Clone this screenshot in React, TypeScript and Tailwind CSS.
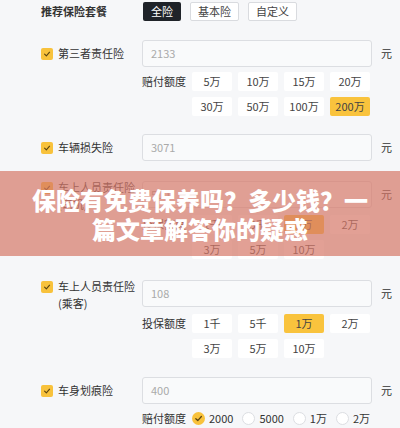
import React from "react";

const font = { fontFamily: '"Noto Sans CJK SC", "Noto Sans", sans-serif' };

function Check({ size = 12 }: { size?: number }) {
  return (
    <svg width={size - 4} height={size - 4} viewBox="0 0 10 10" fill="none">
      <path d="M2 5.2 L4.2 7.3 L8.2 2.8" stroke="#5a4410" strokeWidth="1.4" strokeLinecap="round" strokeLinejoin="round" />
    </svg>
  );
}

function CheckBox() {
  return (
    <div className="w-[12px] h-[12px] shrink-0 rounded-[2px] bg-[#f8c23c] flex items-center justify-center">
      <Check />
    </div>
  );
}

function Opt({ label, active }: { label: string; active?: boolean }) {
  return (
    <div
      className={
        "w-[40px] h-[19px] flex items-center justify-center text-[11px] text-[#444] rounded-[2px] " +
        (active ? "bg-[#f9c33d]" : "bg-white")
      }
    >
      {label}
    </div>
  );
}

function InputRow({
  label,
  label2,
  value,
}: {
  label: string;
  label2?: string;
  value: string;
}) {
  return (
    <div className="flex items-center h-[27px]">
      <div className="w-[101px] h-[27px] relative flex items-center">
        {label2 ? (
          <div className="flex items-start gap-[5px] self-start mt-[-2px]">
            <div className="mt-[2.5px]">
              <CheckBox />
            </div>
            <div className="text-[11px] leading-[17px] text-[#333]">
              <div>{label}</div>
              <div>{label2}</div>
            </div>
          </div>
        ) : (
          <div className="flex items-center gap-[5px]">
            <CheckBox />
            <div className="text-[11px] leading-[17px] text-[#333]">{label}</div>
          </div>
        )}
      </div>
      <div className="w-[230px] h-[27px] border border-[#dcdee2] bg-[#f9fafb] rounded-[3px] flex items-center pl-[8px] text-[11px] text-[#aaaaaa]">
        {value}
      </div>
      <div className="ml-[9px] text-[11px] text-[#333]">元</div>
    </div>
  );
}

function Options({ title, rows }: { title: string; rows: { l: string; a?: boolean }[][] }) {
  return (
    <div className="flex ml-[101px]">
      <div className="w-[50px] h-[19px] flex items-center text-[11px] text-[#333]">{title}</div>
      <div className="flex flex-col gap-[6px]">
        {rows.map((r, i) => (
          <div key={i} className="flex gap-[6px]">
            {r.map((o) => (
              <Opt key={o.l} label={o.l} active={o.a} />
            ))}
          </div>
        ))}
      </div>
    </div>
  );
}

function Radio({ label, checked }: { label: string; checked?: boolean }) {
  return (
    <div className="flex items-center gap-[4px]">
      {checked ? (
        <div className="w-[13px] h-[13px] rounded-full bg-[#f8c23c] flex items-center justify-center">
          <Check size={13} />
        </div>
      ) : (
        <div className="w-[13px] h-[13px] rounded-full bg-white border border-[#dcdee2]" />
      )}
      <span className="text-[11px] text-[#333]">{label}</span>
    </div>
  );
}

export default function App() {
  return (
    <div className="w-[400px] h-[428px] bg-[#f6f7f9] relative overflow-hidden" style={font}>
      <div className="pl-[41px] pt-[2px]">
        <div className="flex items-center h-[19px]">
          <div className="w-[102px] text-[11px] font-bold text-[#333]">推荐保险套餐</div>
          <div className="flex gap-[9px]">
            <div className="h-[19px] px-[8px] flex items-center bg-[#1f2329] text-white text-[11px] rounded-[2px]">全险</div>
            <div className="h-[19px] px-[7px] flex items-center bg-white border border-[#d9dbdf] text-[#444] text-[11px] rounded-[2px]">基本险</div>
            <div className="h-[19px] px-[7px] flex items-center bg-white border border-[#d9dbdf] text-[#444] text-[11px] rounded-[2px]">自定义</div>
          </div>
        </div>

        <div className="mt-[19px]">
          <InputRow label="第三者责任险" value="2133" />
          <div className="mt-[5px]">
            <Options
              title="赔付额度"
              rows={[
                [{ l: "5万" }, { l: "10万" }, { l: "15万" }, { l: "20万" }],
                [{ l: "30万" }, { l: "50万" }, { l: "100万" }, { l: "200万", a: true }],
              ]}
            />
          </div>
        </div>

        <div className="mt-[18px]">
          <InputRow label="车辆损失险" value="3071" />
        </div>

        <div className="mt-[20px]">
          <InputRow label="车上人员责任险" label2="(司机)" value="500" />
          <div className="mt-[7px]">
            <Options
              title="投保额度"
              rows={[
                [{ l: "1千" }, { l: "5千" }, { l: "1万", a: true }, { l: "2万" }],
                [{ l: "3万" }, { l: "5万" }, { l: "10万" }],
              ]}
            />
          </div>
        </div>

        <div className="mt-[21px]">
          <InputRow label="车上人员责任险" label2="(乘客)" value="108" />
          <div className="mt-[7px]">
            <Options
              title="投保额度"
              rows={[
                [{ l: "1千" }, { l: "5千" }, { l: "1万", a: true }, { l: "2万" }],
                [{ l: "3万" }, { l: "5万" }, { l: "10万" }],
              ]}
            />
          </div>
        </div>

        <div className="mt-[19px]">
          <InputRow label="车身划痕险" value="400" />
          <div className="flex ml-[101px] mt-[7px] h-[15px] items-center">
            <div className="w-[50px] text-[11px] text-[#333]">赔付额度</div>
            <div className="flex gap-[9px]">
              <Radio label="2000" checked />
              <Radio label="5000" />
              <Radio label="1万" />
              <Radio label="2万" />
            </div>
          </div>
        </div>
      </div>

      <div className="absolute left-0 top-[171px] w-[400px] h-[85px] bg-[rgba(214,120,104,0.7)] flex items-center justify-center">
        <div className="w-[345px] text-center text-white font-black text-[24px] leading-[29px]">
          保险有免费保养吗？多少钱？一篇文章解答你的疑惑
        </div>
      </div>
    </div>
  );
}
